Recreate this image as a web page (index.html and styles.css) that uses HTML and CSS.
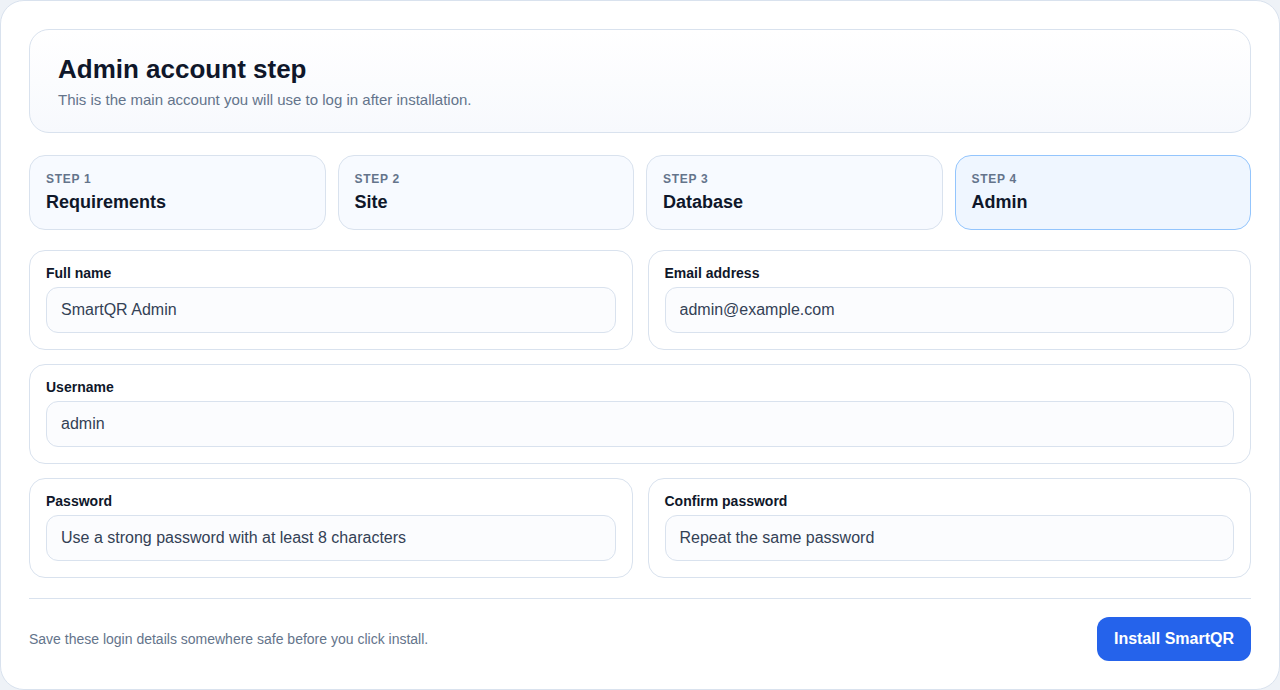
FILE: index.html
```html
<!DOCTYPE html>
<html lang="en">
<head>
<meta charset="utf-8">
<title>Admin account step</title>
<link rel="stylesheet" href="styles.css">
</head>
<body>
<main class="card">
  <header class="hero">
    <h1 class="hero-title">Admin account step</h1>
    <p class="hero-sub">This is the main account you will use to log in after installation.</p>
  </header>

  <ol class="steps">
    <li class="step"><span class="step-num">STEP 1</span><span class="step-name">Requirements</span></li>
    <li class="step"><span class="step-num">STEP 2</span><span class="step-name">Site</span></li>
    <li class="step"><span class="step-num">STEP 3</span><span class="step-name">Database</span></li>
    <li class="step step-active"><span class="step-num">STEP 4</span><span class="step-name">Admin</span></li>
  </ol>

  <form class="form">
    <div class="row row-2">
      <label class="field"><span class="field-label">Full name</span><input class="input" type="text" value="SmartQR Admin"></label>
      <label class="field"><span class="field-label">Email address</span><input class="input" type="email" value="admin@example.com"></label>
    </div>
    <div class="row">
      <label class="field"><span class="field-label">Username</span><input class="input" type="text" value="admin"></label>
    </div>
    <div class="row row-2">
      <label class="field"><span class="field-label">Password</span><input class="input" type="password" placeholder="Use a strong password with at least 8 characters"></label>
      <label class="field"><span class="field-label">Confirm password</span><input class="input" type="password" placeholder="Repeat the same password"></label>
    </div>
  </form>

  <footer class="footer">
    <p class="footer-note">Save these login details somewhere safe before you click install.</p>
    <button class="btn" type="button">Install SmartQR</button>
  </footer>
</main>
</body>
</html>
```

FILE: styles.css
```css
* { box-sizing: border-box; }
html, body { margin: 0; padding: 0; }
body {
  background: #eef2f7;
  font-family: "Liberation Sans", Arial, sans-serif;
  color: #0f172a;
}
.card {
  height: 690px;
  background: #ffffff;
  border: 1px solid #d9e2ee;
  border-radius: 24px;
  padding: 28px 28px 28px;
}
.hero {
  border: 1px solid #d9e2ee;
  border-radius: 20px;
  background: linear-gradient(180deg, #ffffff 0%, #f7f9fd 100%);
  padding: 24px 28px 23px;
}
.hero-title {
  margin: 0;
  font-size: 26px;
  line-height: 30px;
  font-weight: 700;
  color: #0f172a;
}
.hero-sub {
  margin: 7px 0 0;
  font-size: 15px;
  line-height: 18px;
  color: #64748b;
}
.steps {
  list-style: none;
  margin: 22px 0 0;
  padding: 0;
  display: grid;
  grid-template-columns: repeat(4, 1fr);
  gap: 12px;
}
.step {
  display: flex;
  flex-direction: column;
  border: 1px solid #d9e2ee;
  border-radius: 16px;
  background: #f7faff;
  padding: 16px 16px 14px;
  height: 75px;
}
.step-active {
  background: #eff6ff;
  border-color: #93c5fd;
}
.step-num {
  font-size: 12px;
  line-height: 14px;
  font-weight: 700;
  letter-spacing: 0.06em;
  color: #64748b;
}
.step-name {
  margin-top: 5px;
  font-size: 18px;
  line-height: 22px;
  font-weight: 700;
  color: #0f172a;
}
.form {
  margin-top: 20px;
  display: flex;
  flex-direction: column;
  gap: 14px;
}
.row {
  display: grid;
  grid-template-columns: 1fr;
  column-gap: 15px;
}
.row-2 { grid-template-columns: 1fr 1fr; }
.field {
  display: flex;
  flex-direction: column;
  border: 1px solid #d9e2ee;
  border-radius: 16px;
  background: #ffffff;
  padding: 14px 16px 16px;
  height: 100px;
}
.field-label {
  font-size: 14px;
  line-height: 16px;
  font-weight: 700;
  color: #0f172a;
}
.input {
  margin-top: 6px;
  height: 46px;
  width: 100%;
  border: 1px solid #d9e2ee;
  border-radius: 12px;
  background: #fbfcfe;
  padding: 0 14px;
  font-family: "Liberation Sans", Arial, sans-serif;
  font-size: 16px;
  color: #334155;
  outline: none;
}
.input::placeholder { color: #334155; opacity: 1; }
.footer {
  margin-top: 20px;
  border-top: 1px solid #d9e2ee;
  padding-top: 18px;
  display: flex;
  align-items: center;
  justify-content: space-between;
}
.footer-note {
  margin: 0;
  font-size: 14px;
  color: #64748b;
}
.btn {
  height: 44px;
  padding: 0 17px;
  border: none;
  border-radius: 12px;
  background: #2563eb;
  color: #ffffff;
  font-family: "Liberation Sans", Arial, sans-serif;
  font-size: 16px;
  font-weight: 700;
}
```
